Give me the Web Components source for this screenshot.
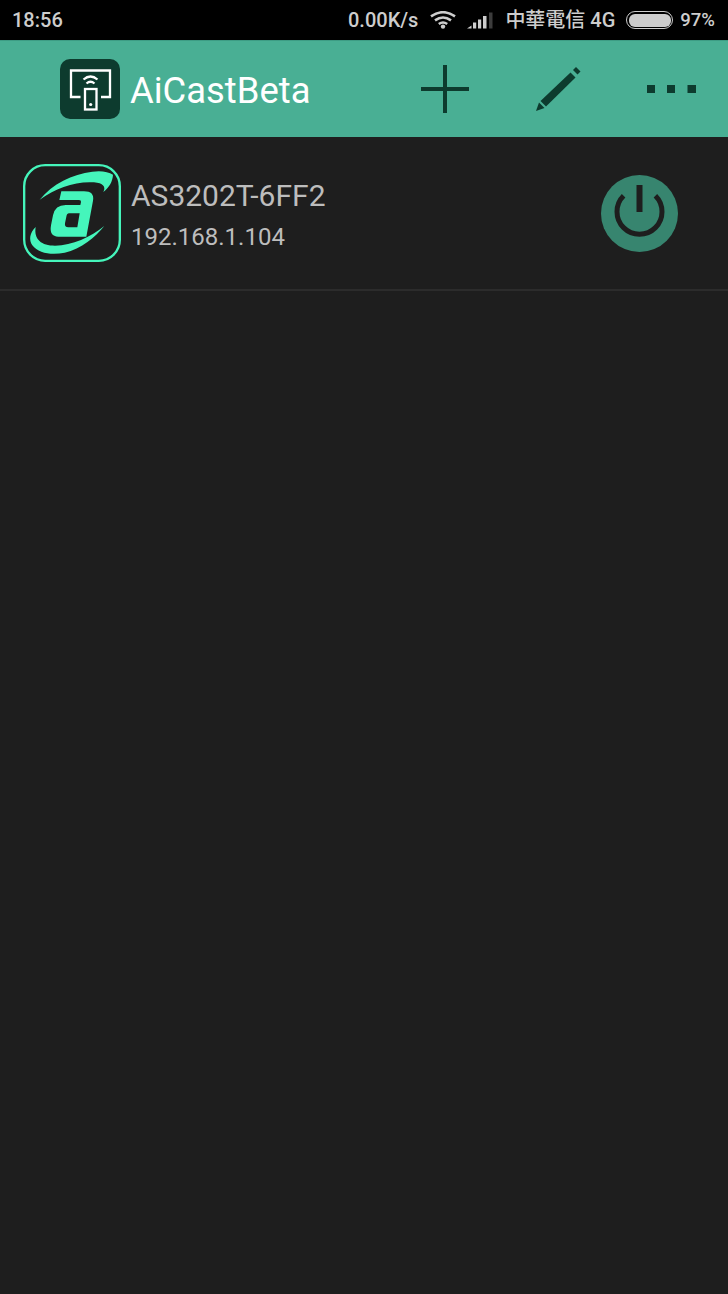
<!DOCTYPE html>
<html>
<head>
<meta charset="utf-8">
<title>AiCastBeta</title>
<style>
  html, body { margin: 0; height: 100%; background: #1e1e1e; }
  body { display: flex; flex-direction: column; font-family: Roboto, "Noto Sans CJK TC", sans-serif; overflow: hidden; }
</style>
</head>
<body>
<status-bar time="18:56" speed="0.00K/s" carrier="中華電信 4G" level="97%"></status-bar>
<app-bar title="AiCastBeta"></app-bar>
<device-row name="AS3202T-6FF2" ip="192.168.1.104"></device-row>

<script>
class StatusBar extends HTMLElement {
    connectedCallback() {
        if (this.shadowRoot) return;
        const root = this.attachShadow({ mode: 'open' });
        root.innerHTML = `<style>
            :host { display: flex; align-items: center; height: 40px; background: #000; color: #cdcdcd;
                font: 500 20px Roboto, "Noto Sans CJK TC", sans-serif; padding: 0 13px 0 12px; box-sizing: border-box; flex: none; }
            .time { flex: 1; }
            .speed { margin-right: 12px; }
            .wifi { margin-right: 11px; }
            .signal { margin-right: 12px; }
            .carrier { margin-right: 11px; white-space: nowrap; margin-top: -4px; }
            .batt { width: 47px; height: 18px; box-sizing: border-box; border: 1.5px solid #cdcdcd; border-radius: 9px; padding: 1.5px; margin-right: 7px; }
            .batt i { display: block; height: 100%; background: #cdcdcd; border-radius: 6px; }
            .level { font-size: 18.5px; }
            svg { display: block; flex: none; }
        </style>
        <span class="time">${this.getAttribute('time')}</span>
        <span class="speed">${this.getAttribute('speed')}</span>
        <svg class="wifi" width="26" height="18" viewBox="0 0 26 18" fill="none" stroke="#cdcdcd" stroke-width="2.6">
            <path d="M1 5.400Q13 -3 25 5.400"/><path d="M5 9.400Q13 3.600 21 9.400"/><path d="M8.800 13Q13 10 17.200 13"/>
            <circle cx="13" cy="15.600" r="2.200" fill="#cdcdcd" stroke="none"/>
        </svg>
        <svg class="signal" width="26" height="17" viewBox="0 0 26 17">
            <path d="M0 16.500L4.500 13.500V16.500Z" fill="#cdcdcd"/>
            <rect x="6" y="10.500" width="3.200" height="6" fill="#cdcdcd"/>
            <rect x="11" y="7.500" width="3.200" height="9" fill="#cdcdcd"/>
            <rect x="16" y="4" width="3.500" height="12.500" fill="#cdcdcd"/>
            <rect x="22" y="0.500" width="3.500" height="16" fill="#3c3c3c"/>
        </svg>
        <span class="carrier">${this.getAttribute('carrier')}</span>
        <div class="batt"><i></i></div>
        <span class="level">${this.getAttribute('level')}</span>`;
    }
}
customElements.define('status-bar', StatusBar);

class AppBar extends HTMLElement {
    connectedCallback() {
        if (this.shadowRoot) return;
        const root = this.attachShadow({ mode: 'open' });
        root.innerHTML = `<style>
            :host { display: flex; align-items: center; height: 97px; background: #49af94; flex: none;
                padding: 0 32px 0 59.5px; box-sizing: border-box; border-top: 1px solid #3d9c84; }
            .icon { width: 60px; height: 60px; margin-right: 10.5px; flex: none; display: block; }
            h1 { margin: 2px 0 0; flex: 1; font: 400 36.4px Roboto, sans-serif; color: #fff; }
            .acts { display: flex; align-items: center; }
            svg { display: block; }
            .plus { margin-right: 66px; }
            .pen { margin-right: 66px; }
        </style>
        <svg class="icon" viewBox="0 0 60 60">
            <rect width="60" height="60" rx="10" fill="#0d3b2e"/>
            <g fill="none" stroke="#fff" stroke-width="2.300">
                <path d="M20.500 38H11V11.500H50V38H41"/>
                <rect x="25" y="30" width="11.500" height="20.500"/>
                <path d="M23.500 20.500Q30.500 14.500 37.500 20.500"/>
                <path d="M26.500 24.500Q30.500 21 34.500 24.500"/>
            </g>
            <circle cx="30.700" cy="45.500" r="1.600" fill="#fff"/>
        </svg>
        <h1>${this.getAttribute('title')}</h1>
        <div class="acts">
            <svg class="plus" width="48" height="48" viewBox="0 0 48 48"><path d="M0 24H48M24 0V48" stroke="#0d3b2e" stroke-width="4"/></svg>
            <svg class="pen" width="46" height="46" viewBox="0 0 46 46" fill="#0d3b2e">
                <path d="M1 45L4 36.500L9.500 42Z"/>
                <path d="M5.500 35L35.500 6.500L40.500 11.500L11 40.500Z"/>
                <path d="M38 4L41 1L45.500 5.500L42.500 8.500Z"/>
            </svg>
            <svg width="49" height="8" viewBox="0 0 49 8" fill="#0d3b2e"><rect width="8" height="8"/><rect x="20" width="8" height="8"/><rect x="40.500" width="8.500" height="8"/></svg>
        </div>`;
    }
}
customElements.define('app-bar', AppBar);

class DeviceRow extends HTMLElement {
    connectedCallback() {
        if (this.shadowRoot) return;
        const root = this.attachShadow({ mode: 'open' });
        root.innerHTML = `<style>
            :host { display: flex; align-items: center; height: 154px; box-sizing: border-box; flex: none;
                padding: 0 50.5px 0 22.5px; border-bottom: 2px solid #2c2c2c; color: #bdbdbd; }
            .logo { width: 98px; height: 98px; flex: none; display: block; margin-right: 10.5px; }
            .info { flex: 1; display: flex; flex-direction: column; gap: 9px; padding-top: 5px; }
            .name { font: 400 30px/34px Roboto, sans-serif; }
            .ip { font: 400 24px/30px Roboto, sans-serif; }
            .power { width: 77px; height: 77px; flex: none; display: block; }
        </style>
        <svg class="logo" viewBox="22 18 294 294">
            <rect x="25.500" y="21.500" width="287" height="287" rx="63" fill="none" stroke="#45f5bb" stroke-width="7"/>
            <g fill="#45f5bb">
                <path d="M72 125C110 78 170 48 230 41C255 37 278 41 292 50C291 70 281 88 263 102C272 87 262 75 235 73C180 69 120 90 72 125Z"/>
                <path d="M60 207C42 225 39 245 50 262C68 287 110 292 147 284C197 273 240 236 266 204C225 238 170 262 118 263C78 263 54 245 60 207Z"/>
                <path fill-rule="evenodd" d="M137 100H205Q237 100 232 128L212 236H128Q100 236 106 202L112 172Q118 141 150 141H194L196 132Q197 126 190 126H131ZM160 166H192L185 208H158Q146 208 148 196L152 176Q154 166 160 166Z"/>
            </g>
        </svg>
        <div class="info">
            <span class="name">${this.getAttribute('name')}</span>
            <span class="ip">${this.getAttribute('ip')}</span>
        </div>
        <svg class="power" viewBox="0 0 77 77">
            <circle cx="38.500" cy="38.500" r="38.500" fill="#37856f"/>
            <path d="M22.600 20.800A22.500 22.500 0 1 0 54.400 20.800" fill="none" stroke="#1e1e1e" stroke-width="5"/>
            <rect x="35.500" y="10" width="6" height="27" fill="#1e1e1e"/>
        </svg>`;
    }
}
customElements.define('device-row', DeviceRow);
</script>
</body>
</html>
